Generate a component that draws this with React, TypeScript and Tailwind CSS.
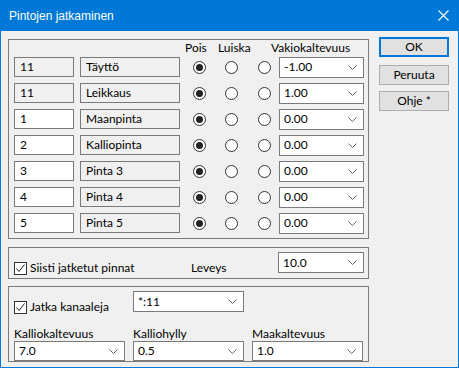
import React from 'react';

const font = { fontFamily: 'Lato, "Liberation Sans", Arial, sans-serif' };
const titleFont = { fontFamily: '"Liberation Sans", Arial, sans-serif' };

const Chevron: React.FC = () => (
  <svg width="9" height="5" viewBox="0 0 9 5" className="shrink-0">
    <path d="M0.5 0.5 L4.5 4.5 L8.5 0.5" fill="none" stroke="#606060" strokeWidth="1" />
  </svg>
);

const Combo: React.FC<{ value: string; w: string; h?: string }> = ({ value, w, h = 'h-[21px]' }) => (
  <div className={`${w} ${h} flex items-center justify-between bg-white border border-[#7a7a7a] pl-[4px] pr-[6px] text-[12px] text-black`}>
    <span>{value}</span>
    <Chevron />
  </div>
);

const Field: React.FC<{ value: string; w: string; readOnly?: boolean }> = ({ value, w, readOnly }) => (
  <div
    className={`${w} h-[20px] flex items-center border border-[#7a7a7a] pl-[5px] text-[12px] text-black ${
      readOnly ? 'bg-[#f0f0f0]' : 'bg-white'
    }`}
  >
    {value}
  </div>
);

const Radio: React.FC<{ checked?: boolean; className?: string }> = ({ checked, className = '' }) => (
  <div className={`w-[13px] h-[13px] rounded-full border border-[#333] bg-white flex items-center justify-center shrink-0 ${className}`}>
    {checked && <div className="w-[7px] h-[7px] rounded-full bg-[#222]" />}
  </div>
);

const Check: React.FC = () => (
  <div className="w-[13px] h-[13px] border border-[#333] bg-white flex items-center justify-center shrink-0">
    <svg width="11" height="11" viewBox="0 0 11 11">
      <path d="M1.5 5.5 L4 8.5 L9.5 1.5" fill="none" stroke="#222" strokeWidth="1" />
    </svg>
  </div>
);

const rows = [
  { id: '11', name: 'Täyttö', value: '-1.00', ro: true },
  { id: '11', name: 'Leikkaus', value: '1.00', ro: true },
  { id: '1', name: 'Maanpinta', value: '0.00', ro: false },
  { id: '2', name: 'Kalliopinta', value: '0.00', ro: false },
  { id: '3', name: 'Pinta 3', value: '0.00', ro: false },
  { id: '4', name: 'Pinta 4', value: '0.00', ro: false },
  { id: '5', name: 'Pinta 5', value: '0.00', ro: false },
];

const Button: React.FC<{ label: string; primary?: boolean; className?: string }> = ({ label, primary, className = '' }) => (
  <div
    className={`w-[70px] h-[20px] flex items-center justify-center bg-[#e1e1e1] text-[12px] text-black ${
      primary ? 'border-2 border-[#0078d7]' : 'border border-[#adadad]'
    } ${className}`}
  >
    {label}
  </div>
);

export default function App() {
  return (
    <div style={font} className="w-[459px] h-[368px] bg-[#f0f0f0] border border-t-0 border-[#0078d7] flex flex-col">
      {/* title bar */}
      <div style={titleFont} className="h-[31px] -mx-px bg-[#0078d7] flex items-center justify-between pl-[9px] pr-[10px] text-white text-[12px] shrink-0">
        <span>Pintojen jatkaminen</span>
        <svg width="11" height="11" viewBox="0 0 11 11">
          <path d="M0.5 0.5 L10.5 10.5 M10.5 0.5 L0.5 10.5" stroke="#fff" strokeWidth="1.1" />
        </svg>
      </div>

      <div className="flex pl-[7px]">
        {/* left column */}
        <div className="w-[361px] mt-[8px] flex flex-col">
          {/* surfaces group */}
          <div className="h-[200px] border border-[#7a7a7a] pl-[5px] flex flex-col">
            <div className="h-[17px] flex items-end text-[12px] text-black">
              <span className="ml-[171px] w-[33px]">Pois</span>
              <span className="w-[53px]">Luiska</span>
              <span>Vakiokaltevuus</span>
            </div>
            <div className="flex flex-col gap-[6px]">
              {rows.map((r, i) => (
                <div key={i} className="flex items-center h-[20px]">
                  <Field value={r.id} w="w-[60px]" readOnly={r.ro} />
                  <Field value={r.name} w="w-[100px] ml-[6px]" readOnly />
                  <Radio checked className="ml-[13px]" />
                  <Radio className="ml-[19px]" />
                  <Radio className="ml-[20px]" />
                  <Combo value={r.value} w="w-[85px] ml-[8px]" />
                </div>
              ))}
            </div>
          </div>

          {/* tidy group */}
          <div className="h-[32px] mt-[8px] border border-[#7a7a7a] pl-[5px] flex items-start">
            <div className="flex items-center mt-[11px] w-[177px]">
              <Check />
              <span className="ml-[3px] text-[12px] text-black">Siisti jatketut pinnat</span>
            </div>
            <span className="mt-[11px] text-[12px] text-black">Leveys</span>
            <div className="ml-auto mr-[4px] mt-[4px]">
              <Combo value="10.0" w="w-[86px]" />
            </div>
          </div>

          {/* channel group */}
          <div className="h-[76px] mt-[7px] border border-[#7a7a7a] pl-[5px] flex flex-col">
            <div className="flex items-start mt-[4px]">
              <div className="flex items-center mt-[7px] w-[119px]">
                <Check />
                <span className="ml-[3px] text-[12px] text-black">Jatka kanaaleja</span>
              </div>
              <Combo value="*:11" w="w-[111px]" />
            </div>
            <div className="flex mt-[11px]">
              <div className="flex flex-col w-[119px]">
                <span className="text-[12px] text-black leading-[14px]">Kalliokaltevuus</span>
                <Combo value="7.0" w="w-[111px]" h="h-[20px]" />
              </div>
              <div className="flex flex-col w-[119px]">
                <span className="text-[12px] text-black leading-[14px]">Kalliohylly</span>
                <Combo value="0.5" w="w-[111px]" h="h-[20px]" />
              </div>
              <div className="flex flex-col">
                <span className="text-[12px] text-black leading-[14px]">Maakaltevuus</span>
                <Combo value="1.0" w="w-[111px]" h="h-[20px]" />
              </div>
            </div>
          </div>
        </div>

        {/* right column */}
        <div className="ml-[10px] mt-[6px] flex flex-col">
          <Button label="OK" primary />
          <Button label="Peruuta" className="mt-[8px]" />
          <Button label="Ohje *" className="mt-[6px]" />
        </div>
      </div>
    </div>
  );
}
